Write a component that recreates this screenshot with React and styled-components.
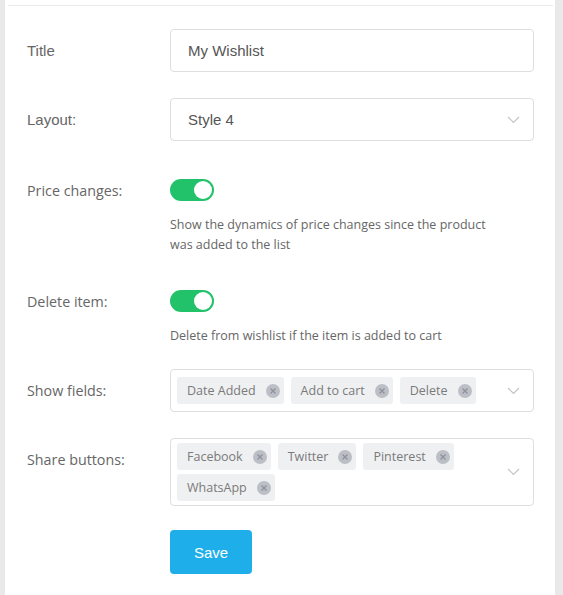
import React, { useState } from 'react'
import styled, { createGlobalStyle } from 'styled-components'

const GlobalStyle = createGlobalStyle`
    html, body {
        margin: 0;
        padding: 0;
        height: 100%;
        background: #e9e9e9;
    }
    #root {
        min-height: 100%;
    }
`

const Panel = styled.div`
    margin: 0 8px 0 5px;
    min-height: 100vh;
    background: #fff;
`

const PanelHeader = styled.div`
    height: 5px;
    margin: 0 2px 0 3px;
    border-bottom: 1px solid #ebebeb;
`

const Form = styled.form`
    display: flex;
    flex-direction: column;
    gap: 26px;
    padding: 23px 21px 20px 22px;
`

const Row = styled.div`
    display: grid;
    grid-template-columns: 143px 1fr;
    align-items: start;
    padding-top: ${p => p.$toggle ? '12px' : '0'};
`

const ActionRow = styled(Row)`
    margin-top: -2px;
`

const Label = styled.label`
    font-family: ${p => p.$arial ? '"Liberation Sans", Arial, sans-serif' : '"Open Sans", sans-serif'};
    font-size: ${p => p.$arial ? '15px' : '14.3px'};
    line-height: ${p => p.$lh || 43}px;
    color: #666;
`

const TextInput = styled.input`
    box-sizing: border-box;
    width: 100%;
    height: 43px;
    border: 1px solid #dedede;
    border-radius: 4px;
    padding: 0 17px;
    font-family: "Liberation Sans", Arial, sans-serif;
    font-size: 15px;
    color: #555;
    outline: none;
`

const SelectBox = styled.div`
    box-sizing: border-box;
    position: relative;
    display: flex;
    align-items: center;
    min-height: 43px;
    border: 1px solid #dedede;
    border-radius: 4px;
    padding: ${p => p.$multi ? '4px 40px 4px 6px' : '0 17px'};
    font-family: "Liberation Sans", Arial, sans-serif;
    font-size: 15px;
    color: #555;
`

const Chevron = styled.svg`
    position: absolute;
    right: 13px;
    top: 50%;
    margin-top: -4px;
`

const ChipList = styled.div`
    display: flex;
    flex-wrap: wrap;
    gap: 4px 7px;
`

const Chip = styled.span`
    display: inline-flex;
    align-items: center;
    gap: 10px;
    height: 27px;
    padding: 0 4px 0 10px;
    border-radius: 3px;
    background: #eff0f2;
    font-family: "Open Sans", sans-serif;
    font-size: 12.5px;
    color: #7a7a7a;
`

const ToggleTrack = styled.button`
    display: block;
    position: relative;
    width: 44px;
    height: 22px;
    padding: 0;
    border: none;
    border-radius: 11px;
    background: ${p => p.$on ? '#21c26a' : '#ccc'};
    cursor: pointer;
    &::after {
        content: '';
        position: absolute;
        top: 2px;
        left: ${p => p.$on ? '24px' : '2px'};
        width: 18px;
        height: 18px;
        border-radius: 50%;
        background: #fff;
    }
`

const Description = styled.p`
    max-width: 320px;
    margin: 14px 0 -3px;
    font-family: "Open Sans", sans-serif;
    font-size: 12.5px;
    line-height: 20px;
    color: #666;
`

const SaveButton = styled.button`
    display: block;
    width: 82px;
    height: 44px;
    border: none;
    border-radius: 4px;
    background: #1eaee9;
    color: #fff;
    font-family: "Liberation Sans", Arial, sans-serif;
    font-size: 15px;
    cursor: pointer;
`

function ChevronDown() {
    return (
        <Chevron width="13" height="8" viewBox="0 0 13 8">
            <path d="M1 1l5.5 5.5L12 1" fill="none" stroke="#c4c4c4" strokeWidth="1.2" />
        </Chevron>
    )
}

function RemoveIcon() {
    return (
        <svg width="14" height="14" viewBox="0 0 14 14">
            <circle cx="7" cy="7" r="7" fill="#bcbfc6" />
            <path d="M4.5 4.5l5 5M9.5 4.5l-5 5" stroke="#8f939b" strokeWidth="1.4" />
        </svg>
    )
}

function Toggle({ on, onChange, children }) {
    return (
        <div>
            <ToggleTrack type="button" $on={on} onClick={onChange} />
            <Description>{children}</Description>
        </div>
    )
}

function MultiSelect({ items }) {
    return (
        <SelectBox $multi>
            <ChipList>
                {items.map(item => (
                    <Chip key={item}>{item}<RemoveIcon /></Chip>
                ))}
            </ChipList>
            <ChevronDown />
        </SelectBox>
    )
}

export default function App() {
    const [ priceChanges, setPriceChanges ] = useState(true)
    const [ deleteItem, setDeleteItem ] = useState(true)

    return (
        <Panel>
            <GlobalStyle />
            <PanelHeader />
            <Form onSubmit={e => e.preventDefault()}>
                <Row>
                    <Label $arial>Title</Label>
                    <TextInput defaultValue="My Wishlist" />
                </Row>
                <Row>
                    <Label $arial>Layout:</Label>
                    <SelectBox>
                        Style 4
                        <ChevronDown />
                    </SelectBox>
                </Row>
                <Row $toggle>
                    <Label $lh={24}>Price changes:</Label>
                    <Toggle on={priceChanges} onChange={() => setPriceChanges(!priceChanges)}>
                        Show the dynamics of price changes since the product was added to the list
                    </Toggle>
                </Row>
                <Row $toggle>
                    <Label $lh={24}>Delete item:</Label>
                    <Toggle on={deleteItem} onChange={() => setDeleteItem(!deleteItem)}>
                        Delete from wishlist if the item is added to cart
                    </Toggle>
                </Row>
                <Row>
                    <Label>Show fields:</Label>
                    <MultiSelect items={['Date Added', 'Add to cart', 'Delete']} />
                </Row>
                <Row>
                    <Label>Share buttons:</Label>
                    <MultiSelect items={['Facebook', 'Twitter', 'Pinterest', 'WhatsApp']} />
                </Row>
                <ActionRow>
                    <span />
                    <div><SaveButton type="submit">Save</SaveButton></div>
                </ActionRow>
            </Form>
        </Panel>
    )
}
